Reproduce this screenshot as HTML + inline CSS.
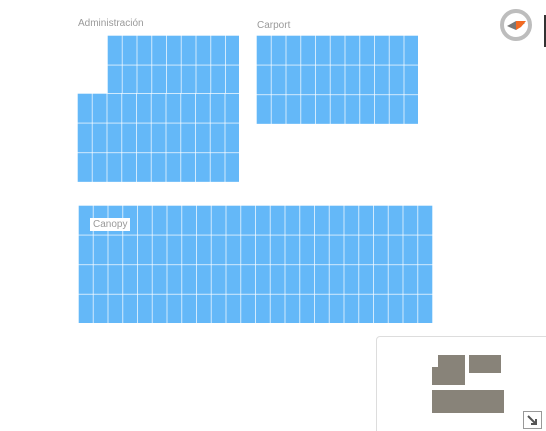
<html><head><style>
html,body{margin:0;width:546px;height:431px;overflow:hidden}
body{background:#fff;position:relative;font-family:"Liberation Sans",sans-serif}
.g{position:absolute;background-color:#64b8f8;background-image:linear-gradient(90deg,rgba(255,255,255,.7) 1px,transparent 1px),linear-gradient(rgba(255,255,255,.7) 1px,transparent 1px);background-size:14.75px 29.6px}
.l{position:absolute;font-size:10px;color:#9a9a9a}
.m{position:absolute;background:#888379}
</style></head><body>
<div class="l" style="left:78px;top:18px">Administración</div>
<div class="l" style="left:257px;top:20px">Carport</div>
<div class="g" style="left:107px;top:35px;width:132px;height:59px"></div>
<div class="g" style="left:77px;top:93px;width:162px;height:89px"></div>
<div class="g" style="left:256px;top:35px;width:162px;height:89px"></div>
<div class="g" style="left:78px;top:205px;width:355px;height:118px"></div>
<div style="position:absolute;left:90px;top:218px;background:#fff;color:#9a9a9a;font-size:10px;padding:1px 3px">Canopy</div>
<svg style="position:absolute;left:498px;top:7px" width="36" height="36"><circle cx="18" cy="18" r="14" fill="none" stroke="#bdbdbd" stroke-width="4"/><path d="M9 19 L18 14 L27 16 L18 23Z" fill="#777"/><path d="M18 14 L28 14 L23 20 L18 23Z" fill="#f26a22"/></svg>
<div style="position:absolute;left:544px;top:15px;width:2px;height:32px;background:#333"></div>
<div style="position:absolute;left:376px;top:336px;width:180px;height:110px;border:1px solid #ddd;border-radius:4px;background:#fff"></div>
<div class="m" style="left:438px;top:355px;width:27px;height:30px"></div>
<div class="m" style="left:432px;top:367px;width:33px;height:18px"></div>
<div class="m" style="left:469px;top:355px;width:32px;height:18px"></div>
<div class="m" style="left:432px;top:390px;width:72px;height:23px"></div>
<svg style="position:absolute;left:522px;top:410px" width="22" height="20"><rect x="1.5" y="1.5" width="18" height="17" fill="#fff" stroke="#999"/><path d="M6 6 L14 14 M14 9 V14 H9" stroke="#555" stroke-width="2" fill="none"/></svg>
</body></html>
